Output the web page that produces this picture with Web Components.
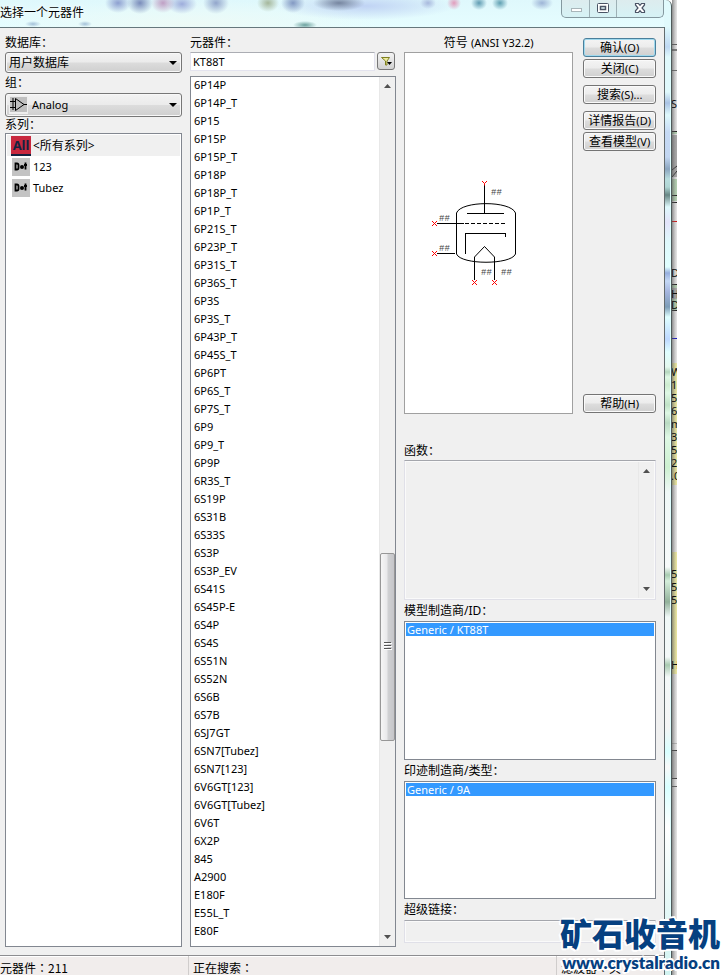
<!DOCTYPE html>
<html lang="zh-CN">
<head>
<meta charset="utf-8">
<title>选择一个元器件</title>
<style>
html,body{margin:0;background:#fff}
body{font:11px/18px "Noto Sans","Noto Sans CJK SC",sans-serif;color:#000}
</style>
</head>
<body>
<component-picker></component-picker>
<script>
const define=(name,css,html,setup)=>customElements.define(name,class extends HTMLElement{
  connectedCallback(){
    if(this.shadowRoot)return;
    const root=this.attachShadow({mode:'open'});
    const t=document.createElement('template');
    t.innerHTML='<style>*{box-sizing:border-box}'+css+'</style>'+(typeof html==='function'?html(this):html);
    root.append(t.content.cloneNode(true));
    if(setup)setup(this,root);
  }
});
const zh='font-size:12px;';

/* Title bar with blurred toolbar showing through the glass */
define('title-bar',`
:host{display:flex;justify-content:space-between;height:27px;overflow:hidden;
background:
radial-gradient(ellipse 13px 10px at 118px 3px,#8d9fd0,transparent),
radial-gradient(ellipse 13px 11px at 140px 3px,#7a8cba,transparent),
radial-gradient(ellipse 12px 10px at 163px 3px,#bf9fc4,transparent),
radial-gradient(ellipse 15px 10px at 182px 4px,#9dacdb,transparent),
radial-gradient(ellipse 13px 11px at 216px 3px,#92a5cb,transparent),
radial-gradient(ellipse 11px 9px at 268px 3px,#a5b79b,transparent),
radial-gradient(ellipse 12px 10px at 293px 3px,#8298c2,transparent),
radial-gradient(ellipse 26px 8px at 339px 3px,#76859f,transparent),
radial-gradient(ellipse 12px 4px at 305px 25px,#6aa09d,transparent),
radial-gradient(ellipse 8px 3px at 33px 24px,#a3c0d8,transparent),
radial-gradient(ellipse 7px 3px at 85px 24px,#a3c0d8,transparent),
radial-gradient(ellipse 8px 6px at 428px 3px,#a8b9dd,transparent),
radial-gradient(ellipse 7px 7px at 454px 3px,#e19cbc,transparent),
radial-gradient(ellipse 8px 7px at 479px 3px,#5f9cb2,transparent),
radial-gradient(ellipse 8px 7px at 500px 3px,#5fa0b2,transparent),
radial-gradient(ellipse 11px 7px at 542px 3px,#9db4d6,transparent),
radial-gradient(ellipse 90px 14px at 365px 6px,#c0d3f4,transparent),
radial-gradient(ellipse 190px 24px at 190px 24px,#edfaf6,transparent),
linear-gradient(#dff8fc,#e6fdff)}
h1{margin:0;padding-top:4px;font-size:12px;font-weight:400;line-height:18px;text-shadow:0 0 6px #fff,0 0 3px #fff}
div{display:flex;height:18px;border:1px solid #84989f;border-top:0;border-radius:0 0 5px 5px;overflow:hidden;background:linear-gradient(#ddecee,#d6f2f5)}
button{border:0;padding:0;background:none;width:27px;display:grid;place-items:center}
button+button{border-left:1px solid #9db0b5}
button:last-child{width:47px}
`,`<h1>选择一个元器件</h1><div>
<button aria-label="最小化"><svg width="28" height="17"><rect x="9.5" y="8.500" width="10" height="3" fill="#fff" stroke="#a9b6ba"/></svg></button>
<button aria-label="最大化"><svg width="24" height="17"><rect x="6.500" y="3.500" width="11" height="9" rx="1" fill="#fff" stroke="#4a5365"/><rect x="9.500" y="6.500" width="5" height="3" fill="#dff4f7" stroke="#4a5365" stroke-width="1.500"/></svg></button>
<button aria-label="关闭"><svg width="24" height="17"><path d="M7.500 3.500h3L12 5.300l1.500-1.800h3v1.500L14 8l2.500 2.800v1.700h-3L12 10.700l-1.500 1.800h-3v-1.700L10 8 7.500 5z" fill="#fff" stroke="#4a5365" stroke-width="1.200"/></svg></button></div>`);

define('combo-field',`
:host{display:block}
label{display:block;${zh}line-height:var(--label-h,20px)}
.box{display:flex;align-items:center;height:var(--h);border:1px solid #777;border-radius:3px;background:linear-gradient(#f3f3f3,#ebebeb 48%,#dcdcdc 52%,#cfcfcf);box-shadow:inset 0 0 0 1px #f8f8f8;padding:0 4px 0 3px}
select{appearance:none;flex:1;min-width:0;height:100%;border:0;background:none;padding:0;font:inherit;color:inherit;font-size:var(--fs,12px);outline:0}
::slotted(svg){margin-right:4px;flex:none}
`,h=>`<label for="s">${h.getAttribute('label')}</label><div class="box"><slot></slot><select id="s"><option>${h.getAttribute('value')}</option></select><svg width="8" height="4"><path d="M0 0h8L4 4z"/></svg></div>`);

define('push-button',`
:host{display:block}
button{display:block;width:100%;height:19px;padding:0;border:1px solid #747474;border-radius:3px;font:inherit;${zh}line-height:17px;color:#000;white-space:nowrap;background:linear-gradient(#f4f4f4,#ececec 48%,#dddddd 52%,#d0d0d0);box-shadow:inset 0 0 0 1px #fafafa}
:host([primary]) button{border-color:#4b7f9b;box-shadow:inset 0 0 0 1px #9fd9ee}
::slotted(span){font-size:11px}
`,`<button><slot></slot></button>`);

define('scroll-strip',`
:host{display:flex;flex-direction:column;justify-content:space-between;flex:none;width:16px;background:#f0f0f0;border-left:1px solid #e8e8e8}
button{border:0;background:none;height:18px;padding:0;width:100%;display:grid;place-items:center}
.track{flex:1;display:flex;flex-direction:column}
.gap{flex:460 1 0}.end{flex:188 1 0}
.thumb{flex:187 1 0;border:1px solid #979797;border-radius:2px;background:linear-gradient(90deg,#f6f6f6,#e9e9eb 45%,#d0d1d3 55%,#c5c5c9);display:grid;place-items:center}
:host(:not([thumb])) .track{visibility:hidden}
`,`<button aria-label="向上滚动"><svg width="7" height="4"><path d="M3.500 0L7 4H0z" fill="#505050"/></svg></button>
<div class="track"><i class="gap"></i><div class="thumb"><svg width="8" height="9" shape-rendering="crispEdges"><path d="M0 .5h7M0 3.5h7M0 6.5h7" stroke="#555"/><path d="M0 1.5h8M0 4.5h8M0 7.5h8" stroke="#fff"/></svg></div><i class="end"></i></div>
<button aria-label="向下滚动"><svg width="7" height="4"><path d="M0 0h7L3.500 4z" fill="#505050"/></svg></button>`);

define('list-panel',`
:host{display:flex;flex-direction:column;min-height:0}
.label{${zh}line-height:var(--label-h,21px)}
.box{flex:1;display:flex;min-height:0;background:#fff;border:1px solid #828790;padding:var(--pad,1px)}
.items{flex:1;min-width:0}
`,h=>`${h.hasAttribute('label')?`<div class="label" id="l">${h.getAttribute('label')}</div>`:''}<div class="box"><div class="items" role="listbox" ${h.hasAttribute('label')?'aria-labelledby="l"':'aria-label="元器件"'}><slot></slot></div><slot name="scroll"></slot></div>`);

define('list-item',`
:host{display:flex;align-items:center;height:18px;line-height:16px;padding:0 0 2px 3px;white-space:pre}
:host([selected]){height:13px;padding:0 0 0 1px;background:#39f;color:#fff;line-height:13px}
:host([series]){height:21px;line-height:21px;padding:0 0 0 4px;gap:3px}
:host([current]){background:#f0f0f0;font-size:12px}
`,`<slot></slot>`,h=>{h.setAttribute('role','option')});

define('search-row',`
:host{display:block}
label{display:block;margin-top:6px;${zh}line-height:18px}
div{display:flex;gap:2px;height:19px;margin-bottom:5px}
input{flex:1;min-width:0;border:1px solid #e3e3ee;border-top-color:#abadb3;background:#fff;font:inherit;color:#000;padding:0 2px;outline:0}
button{width:18px;height:18px;margin-right:1px;padding:0;border:1px solid #777;border-radius:3px;background:linear-gradient(#f4f4f4,#d2d2d2);display:grid;place-items:center}
`,`<label for="q">元器件：</label><div><input id="q" value="KT88T"><button aria-label="筛选"><svg width="14" height="12"><path d="M2.500 2.500h8L8 6v4H6.500V6z" fill="#ececa0" stroke="#808020"/><path d="M8 7h5l-2.500 3z"/></svg></button></div>`);

define('symbol-view',`
:host{display:flex;flex-direction:column}
.t{margin-top:6px;${zh}line-height:18px;text-align:center;white-space:nowrap}
.t span{font-size:11px}
.v{flex:1;display:grid;place-items:center;background:#fff;border:1px solid #a0a0a0}
text{font:9px "Liberation Mono",monospace;fill:#444}
`,()=>{
  const x=(a,b)=>`M${a-2} ${b-2}l5 5M${a+3} ${b-2}l-5 5`;
  return `<div class="t">符号 <span>(ANSI Y32.2)</span></div><div class="v"><svg width="160" height="121" viewBox="409 172 160 121" fill="none" stroke="#000" role="img" aria-label="电子管符号">
<path shape-rendering="crispEdges" d="M484.500 184V212.500M467 212.500H504M437 222.500H464M437 252.500H455M465.500 253V232.500H505.500V236M474.500 279V255.500M494.500 279V255.500"/>
<path shape-rendering="crispEdges" stroke-dasharray="4 2" d="M465 222.500H505"/>
<path d="M456.500 212V253C461 264 511 264 515.500 253V212C511 199.500 461 199.500 456.500 212ZM474.500 256L484.500 245.500 494.500 256"/>
<path stroke="#f00" d="M482 180l2.500 2.500 2.500-2.500M484.500 182.500v2${x(434,222)}${x(434,252)}${x(474,281)}${x(494,281)}"/>
<g stroke="none"><text x="491" y="194">##</text><text x="439" y="220">##</text><text x="439" y="250">##</text><text x="481" y="274">##</text><text x="501" y="274">##</text></g></svg></div>`});

define('text-panel',`
:host{display:flex;flex-direction:column}
label{${zh}line-height:var(--label-h,21px)}
div{flex:1;display:flex;border:1px solid #e0e0e8;border-top-color:#a4a6ac;background:#f0f0f0;box-shadow:inset 0 0 0 1px #fafafa;padding:1px}
textarea{flex:1;min-width:0;height:100%;border:0;background:none;resize:none;padding:0;font:inherit;outline:0}
`,h=>`<label for="a">${h.getAttribute('label')}</label><div><textarea id="a" rows="1" readonly></textarea>${h.hasAttribute('scroll')?'<scroll-strip></scroll-strip>':''}</div>`);

define('status-bar',`
:host{display:grid;grid-template-columns:188fr 368fr 108fr;height:20px;background:#f1edec;border-top:1px solid #8d8d90;box-shadow:inset 0 1px #fff;overflow:hidden;font:12px/20px "Noto Sans CJK TC","Noto Sans CJK SC",sans-serif}
span{padding:2px 0 0 4px;border-left:1px solid #d0cdcc;white-space:nowrap}
span:first-of-type{padding-left:0;border:0}
`,`<span lang="zh-Hant">元器件：211</span><span lang="zh-Hant">正在搜索：</span><span lang="zh-Hant">滤波器：关</span>`);

define('site-mark',`
:host{position:absolute;right:8px;bottom:0;color:#064080;text-align:right;white-space:nowrap;
text-shadow:1px 0 #fff,-1px 0 #fff,0 1px #fff,0 -1px #fff,2px 1px #fff,-2px 1px #fff,1px -2px #fff,-1px 2px #fff}
b{display:block;font:900 32px/38px "Noto Sans CJK SC",sans-serif}
a{display:block;padding:2px 0;color:inherit;text-decoration:none;font:800 17px/20px Lato,sans-serif}
`,`<b>矿石收音机</b><a href="#">www.crystalradio.cn</a>`);

/* Schematic sheet behind the dialog: only a thin slice is visible */
define('sheet-edge',`
:host{display:block;width:5px;flex:none;overflow:hidden;background:#e2e2e2}
svg{display:block}
text{font:11px "Noto Sans",sans-serif;fill:#111}
`,()=>{
 const r=(y,h,c)=>`<rect y="${y}" width="5" height="${h}" fill="${c}"/>`;
 const t=(y,s)=>`<text x="-1" y="${y}">${s}</text>`;
 return `<svg width="5" height="975"><defs><linearGradient id="g"><stop stop-color="#555" stop-opacity=".65"/><stop offset="1" stop-color="#999" stop-opacity=".1"/></linearGradient></defs>
${r(0,975,'#eee')}${r(44,1,'#555')}${r(49,2,'#777')}${r(70,1,'#666')}${r(131,1,'#111')}${r(132,2,'#b5dab5')}${r(135,42,'#aaa')}${r(179,22,'#b5d6b3')}${r(195,1,'#111')}${r(202,1,'#111')}${r(221,1,'#d00')}${r(284,1,'#111')}${r(285,3,'#b5d6b3')}${r(288,11,'#aaa')}${r(299,11,'#b5d6b3')}${r(310,1,'#111')}${r(338,1,'#00c')}${r(363,122,'#f3f0a0')}${r(552,122,'#f3f0a0')}${r(743,1,'#bbb')}${r(750,1,'#333')}${r(751,27,'#ccc')}${r(778,1,'#333')}${r(786,1,'#555')}
<path d="M0 170l5-4M0 177l5-6" stroke="#222"/>
<rect width="5" height="975" fill="url(#g)"/>
${t(108,'S')}${t(277,'D')}${t(298,'H')}${t(309,'D')}${t(376,'W')}${t(389,'1')}${t(402,'5')}${t(415,'62')}${t(428,'m')}${t(441,'3')}${t(454,'5')}${t(467,'2')}${t(480,'.0')}${t(578,'5.')}${t(591,'5')}${t(604,'5')}${t(669,'H')}
</svg>`});

const parts='6P14P,6P14P_T,6P15,6P15P,6P15P_T,6P18P,6P18P_T,6P1P_T,6P21S_T,6P23P_T,6P31S_T,6P36S_T,6P3S,6P3S_T,6P43P_T,6P45S_T,6P6PT,6P6S_T,6P7S_T,6P9,6P9_T,6P9P,6R3S_T,6S19P,6S31B,6S33S,6S3P,6S3P_EV,6S41S,6S45P-E,6S4P,6S4S,6S51N,6S52N,6S6B,6S7B,6SJ7GT,6SN7[Tubez],6SN7[123],6V6GT[123],6V6GT[Tubez],6V6T,6X2P,845,A2900,E180F,E55L_T,E80F'.split(',');
const dot='<svg width="18" height="18" style="margin-left:1px"><rect width="18" height="18" fill="#c3c3c3"/><path fill="none" stroke="#000" stroke-width="1.800" d="M3.500 5.500v6h1.500q1.500 0 1.500-1.500v-3q0-1.500-1.500-1.500zM13.500 4.500v7M12 7h3"/><circle cx="10" cy="9" r="2"/></svg>';

define('component-picker',`
:host{position:relative;display:flex;min-height:100vh;overflow:hidden;padding-right:51px}
.win{flex:1;min-width:0;display:grid;grid-template-columns:minmax(0,1fr) 7px;border-right:1px solid #4f5a5a;border-top-right-radius:6px;overflow:hidden;background:#e0fafc}
.main{display:flex;flex-direction:column;min-width:0}
.glass{margin-top:27px;border-left:1px solid #636b6d;border-right:1px solid #dfffff;background:
linear-gradient(#dff9fc 0,#bfd8f2 20px,#e0f9fc 30px,#e0f9fc 65px,#a9c2e4 76px,#dff9fc 88px,#c6daf5 105px,#c2d6f1 130px,#8ba5bf 142px,#b9ddde 152px,#b0d6d4 160px,#678684 168px,#dff9fc 180px,#e3e3fa 195px,#dff9fc 215px,#e0ffff 240px,#96aede 246px,#c4d8f5 254px,#a5b5de 265px,#7d9db7 280px,#e0ffff 290px,#bdd8ff 312px,#e0ffff 325px,#e4f8ee 340px,#b4d6bd 345px,#dff8e5 350px,#cdeccf 358px,#dff8e5 366px,#c0e2c6 378px,#dff8e5 386px,#b9dac2 396px,#dff8e5 410px,#cdf0d0 440px,#f0f8f7 465px,#f7fafa 540px,#a7cbb0 548px,#d5eedb 554px,#92b19a 575px,#f0f8f7 590px,#f4f8f8 630px,#a8c9af 638px,#f4f8f8 650px,#f5f5f5 700px,#d8ffff 725px,#f9f9f9 740px,#d8ffff 760px,#fff 800px,#d0f2f0)}
.client{flex:1;display:grid;grid-template-columns:minmax(0,177fr) minmax(0,206fr) minmax(0,252fr);gap:8px;padding:0 8px 8px 5px;background:#f0f0f0;border-top:1px solid #66777c}
.col{display:flex;flex-direction:column;min-width:0}
.first{--h:21px;--label-h:18px;margin-top:6px}
.group{--h:24px;--label-h:20px;--fs:11px}
.series{flex:1;--label-h:16px;--pad:1px}
.parts{flex:1;--pad:0}
.right{padding-bottom:4px}
.top{flex:386 1 0;display:grid;grid-template-columns:minmax(0,170fr) minmax(0,73fr);gap:10px}
.buttons{display:flex;flex-direction:column;gap:2px;padding:10px 0 1px}
.break{margin-top:5px}
.last{margin-top:auto}
.fn{flex:158 1 0;--label-h:18px;padding-top:28px}
.model{flex:160 1 0}.foot{flex:139 1 0}
.link{flex:44 1 0}
`,`<div class="win"><div class="main"><title-bar></title-bar>
<div class="client">
<div class="col">
<combo-field class="first" label="数据库：" value="用户数据库"></combo-field>
<combo-field class="group" label="组：" value="Analog"><svg width="19" height="18"><rect width="19" height="18" fill="#eee"/><rect x="1" y="1" width="17" height="15" fill="#c0c0c0"/><path d="M6.500 2.500v12L15 8.500zM1 5.500h5M1 11.500h5M15 8.500h3M4 2v12" fill="none" stroke="#000"/></svg></combo-field>
<list-panel class="series" label="系列：">
<list-item series current><svg width="20" height="20" style="margin-right:-1px"><rect width="20" height="20" fill="#c8283e"/><rect y="18" width="20" height="2" fill="#142340"/><text x="10" y="14" text-anchor="middle" style="font:bold 13px 'Noto Sans',sans-serif" fill="#142340">All</text></svg>&lt;所有系列&gt;</list-item>
<list-item series>${dot}123</list-item><list-item series>${dot}Tubez</list-item>
</list-panel></div>
<div class="col"><search-row></search-row>
<list-panel class="parts">${parts.map(p=>`<list-item>${p}</list-item>`).join('')}<scroll-strip slot="scroll" thumb></scroll-strip></list-panel></div>
<div class="col right">
<div class="top"><symbol-view></symbol-view><div class="buttons">
<push-button primary>确认<span>(O)</span></push-button><push-button>关闭<span>(C)</span></push-button>
<push-button class="break">搜索<span>(S)...</span></push-button><push-button class="break">详情报告<span>(D)</span></push-button>
<push-button>查看模型<span>(V)</span></push-button><push-button class="last">帮助<span>(H)</span></push-button></div></div>
<text-panel class="fn" label="函数：" scroll></text-panel>
<list-panel class="model" label="模型制造商/ID："><list-item selected>Generic / KT88T</list-item></list-panel>
<list-panel class="foot" label="印迹制造商/类型："><list-item selected>Generic / 9A</list-item></list-panel>
<text-panel class="link" label="超级链接："></text-panel>
</div></div>
<status-bar></status-bar></div><div class="glass"></div></div>
<sheet-edge></sheet-edge><site-mark></site-mark>`);
</script>
</body>
</html>
